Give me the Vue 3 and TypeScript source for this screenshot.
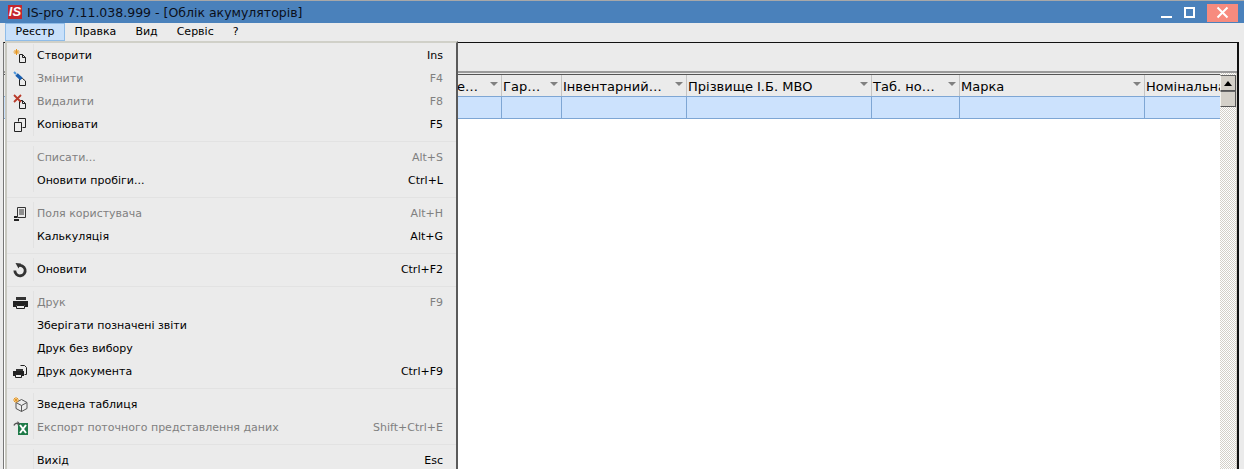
<script setup lang="ts">
type Row = { sep?: boolean; label?: string; key?: string; off?: boolean; icon?: string }
const rows: Row[] = [
  { label: 'Створити', key: 'Ins', icon: 'new' },
  { label: 'Змінити', key: 'F4', off: true, icon: 'edit' },
  { label: 'Видалити', key: 'F8', off: true, icon: 'del' },
  { label: 'Копіювати', key: 'F5', icon: 'copy' },
  { sep: true },
  { label: 'Списати...', key: 'Alt+S', off: true },
  { label: 'Оновити пробіги...', key: 'Ctrl+L' },
  { sep: true },
  { label: 'Поля користувача', key: 'Alt+H', off: true, icon: 'fields' },
  { label: 'Калькуляція', key: 'Alt+G' },
  { sep: true },
  { label: 'Оновити', key: 'Ctrl+F2', icon: 'refresh' },
  { sep: true },
  { label: 'Друк', key: 'F9', off: true, icon: 'print' },
  { label: 'Зберігати позначені звіти' },
  { label: 'Друк без вибору' },
  { label: 'Друк документа', key: 'Ctrl+F9', icon: 'printdoc' },
  { sep: true },
  { label: 'Зведена таблиця', icon: 'cube' },
  { label: 'Експорт поточного представлення даних', key: 'Shift+Ctrl+E', off: true, icon: 'excel' },
  { sep: true },
  { label: 'Вихід', key: 'Esc' },
]
const cols = [
  { text: 'е…', w: 498, cls: 'first' },
  { text: 'Гар…', w: 60 },
  { text: 'Інвентарний…', w: 125 },
  { text: 'Прізвище І.Б. МВО', w: 185 },
  { text: 'Таб. но…', w: 88 },
  { text: 'Марка', w: 185 },
  { text: 'Номінальна', w: 80, noArrow: true },
]
const menus = ['Правка', 'Вид', 'Сервіс', '?']
</script>

<template>
  <div class="app">
    <header class="titlebar">
      <span class="logo">IS</span>
      <span class="title">IS-pro 7.11.038.999 - [Облік акумуляторів]</span>
      <span class="winbtns">
        <i class="min"></i>
        <i class="max"></i>
        <span class="close">
          <svg width="13" height="13" viewBox="0 0 13 13"><path d="M1.5 1.5l10 10M11.5 1.5l-10 10" stroke="#fff" stroke-width="2" fill="none" /></svg>
        </span>
      </span>
    </header>
    <nav class="menubar">
      <span class="mi active">Реєстр</span>
      <span v-for="m in menus" :key="m" class="mi">{{ m }}</span>
    </nav>
    <main class="work">
      <div class="toolbar"></div>
      <div class="tablewrap">
        <div class="grid">
          <div class="head">
            <div v-for="c in cols" :key="c.text" class="hc" :class="c.cls" :style="{ width: c.w + 'px' }">
              <span class="ht">{{ c.text }}</span>
              <i v-if="!c.noArrow" class="arrow"></i>
            </div>
          </div>
          <div class="selrow">
            <div v-for="c in cols" :key="c.text" class="sc" :style="{ width: c.w + 'px' }"></div>
          </div>
        </div>
        <div class="scroll">
          <div class="up"><i></i></div>
          <div class="thumb"></div>
        </div>
      </div>
    </main>

    <div class="dropdown">
      <template v-for="(r, i) in rows" :key="i">
        <div v-if="r.sep" class="sep"></div>
        <div v-else class="row" :class="{ off: r.off }">
          <span class="ico">
            <svg v-if="r.icon === 'new'" width="16" height="16" viewBox="0 0 16 16">
              <path d="M6.500 6.500h3l3 3v5h-6zM9.500 6.500v3h3" fill="#ebebeb" stroke="#222" />
              <path d="M3.500 1v6M.5 4h6M1.500 2l4 4M5.500 2l-4 4" stroke="#e6961e" />
            </svg>
            <svg v-else-if="r.icon === 'edit'" width="16" height="16" viewBox="0 0 16 16">
              <path d="M6.500 7.500h3l3 2.500v4.500h-6z" fill="#ebebeb" stroke="#222" />
              <path d="M3.500 3.500l5 4.500" stroke="#1a5fb0" stroke-width="3.600" />
              <path d="M1 1l2 2" stroke="#4f97dc" stroke-width="2" />
            </svg>
            <svg v-else-if="r.icon === 'del'" width="16" height="16" viewBox="0 0 16 16">
              <path d="M6.500 6.500h3l3 3v5h-6zM9.500 6.500v3h3" fill="#ebebeb" stroke="#222" />
              <path d="M1 1l7 7M8 1l-7 7" stroke="#b93a2a" stroke-width="1.800" />
            </svg>
            <svg v-else-if="r.icon === 'copy'" width="16" height="16" viewBox="0 0 16 16">
              <path d="M5.500 4.500v-3h7v9h-3" fill="none" stroke="#222" />
              <path d="M1.500 5.500h7v9h-7z" fill="#ebebeb" stroke="#222" />
            </svg>
            <svg v-else-if="r.icon === 'fields'" width="16" height="16" viewBox="0 0 16 16">
              <path d="M4.500 1.500h8v10h-8z" fill="#ebebeb" stroke="#333" />
              <path d="M6 4h5M6 6h5M6 8h5" stroke="#333" />
              <path d="M1 10h3v2H1zM1 13h5v2H1z" fill="#222" />
            </svg>
            <svg v-else-if="r.icon === 'refresh'" width="16" height="16" viewBox="0 0 16 16">
              <path d="M5 3.800a5.200 5.200 0 1 1-3.200 4.800" fill="none" stroke="#333" stroke-width="2.800" />
              <path d="M2.500 1l5.500 .5-2.500 5z" fill="#333" />
            </svg>
            <svg v-else-if="r.icon === 'print'" width="16" height="16" viewBox="0 0 16 16">
              <path d="M3 2h10v3H3z" fill="#333" />
              <path d="M0 6h15v6H12v-2H3v2H0z" fill="#222" />
              <path d="M3.500 10.500h8v3h-8z" fill="#ebebeb" stroke="#222" />
            </svg>
            <svg v-else-if="r.icon === 'printdoc'" width="16" height="16" viewBox="0 0 16 16">
              <path d="M7.500 1.500h4l2 2v7h-2" fill="none" stroke="#222" />
              <path d="M3 5h7v2H3z" fill="#333" />
              <path d="M0 7h11v5H0z" fill="#222" />
              <path d="M2.500 10.500h6v3h-6z" fill="#ebebeb" stroke="#222" />
            </svg>
            <svg v-else-if="r.icon === 'cube'" width="16" height="16" viewBox="0 0 16 16">
              <path d="M8.500 2.500l5.500 3v6l-5.500 3-5.500-3v-6zM3 5.500l5.500 3 5.500-3M8.500 8.500v6" fill="#ebebeb" stroke="#555" />
              <path d="M3 0v6M0 3h6M1 1l4 4M5 1l-4 4" stroke="#e6961e" />
            </svg>
            <svg v-else-if="r.icon === 'excel'" width="16" height="16" viewBox="0 0 16 16">
              <path d="M5 3h10v12H5z" fill="#1e7a48" />
              <path d="M7 5l6 8M13 5l-6 8" stroke="#fff" stroke-width="2" />
              <path d="M1 5.500a3 3 0 0 1 4-2" fill="none" stroke="#555" stroke-width="1.400" />
              <path d="M4.500 1l2.500 2.500L4.500 5.500z" fill="#555" />
            </svg>
          </span>
          <span class="label">{{ r.label }}</span>
          <span class="key">{{ r.key }}</span>
        </div>
      </template>
    </div>
  </div>
</template>

<style>
html, body { margin: 0; background: #ebebeb; }
</style>

<style scoped>
.app {
  position: relative;
  width: 1244px;
  height: 469px;
  overflow: hidden;
  display: flex;
  flex-direction: column;
  background: #ebebeb;
  font-family: "DejaVu Sans", sans-serif;
  font-size: 11px;
  color: #000;
}
.titlebar {
  height: 22px;
  flex: none;
  border-top: 1px solid #a8a8a8;
  background: #4a81bb;
  display: flex;
  align-items: center;
  padding: 0 6px 0 8px;
}
.logo {
  width: 14px;
  height: 14px;
  background: #c4262e;
  color: #fff;
  font: italic bold 13px/14px "Liberation Sans", sans-serif;
  text-align: center;
  flex: none;
}
.title {
  margin-left: 5px;
  font-size: 12.5px;
  color: #0b0f1a;
  white-space: nowrap;
}
.winbtns {
  margin-left: auto;
  display: flex;
  align-items: center;
  align-self: stretch;
}
.min {
  width: 11px;
  height: 2px;
  background: #fff;
  margin: 10px 12px 0 0;
}
.max {
  width: 11px;
  height: 11px;
  box-sizing: border-box;
  border: 2px solid #fff;
  margin-right: 12px;
}
.close {
  width: 31px;
  height: 18px;
  margin-top: 1px;
  background: #f78b7e;
  display: flex;
  align-items: center;
  justify-content: center;
}
.menubar {
  height: 18px;
  flex: none;
  display: flex;
  padding-left: 5px;
  background: #ebebeb;
}
.mi {
  padding: 0 9.5px;
  line-height: 18px;
  box-sizing: border-box;
}
.mi.active {
  width: 60px;
  padding: 0;
  text-align: center;
  background: #c8e0fa;
  border: 1px solid #8fbce8;
  line-height: 16px;
}
.work {
  flex: 1;
  min-height: 0;
  display: flex;
  flex-direction: column;
  margin: 1px 5px 0 3px;
  border-top: 1px solid #111;
  border-right: 2px solid #111;
  border-left: 1px solid #777;
}
.toolbar {
  height: 28px;
  flex: none;
  border-bottom: 2px solid #9a9a9a;
}
.tablewrap {
  flex: 1;
  min-height: 0;
  display: flex;
  background: #fff;
}
.grid {
  flex: 1;
  min-width: 0;
  overflow: hidden;
  padding-top: 1px;
  background: #ebebeb;
}
.head {
  height: 22px;
  box-sizing: border-box;
  border-top: 1px solid #555;
  display: flex;
}
.hc {
  flex: none;
  box-sizing: border-box;
  position: relative;
  border-right: 1px solid #c4c4c4;
  padding-left: 1px;
  font-size: 13px;
  line-height: 23px;
  white-space: nowrap;
  overflow: hidden;
}
.hc.first {
  padding-left: 453px;
}
.arrow {
  position: absolute;
  right: 3px;
  top: 7px;
  width: 0;
  height: 0;
  border: 4px solid transparent;
  border-top: 4px solid #808080;
  border-bottom: 0;
}
.selrow {
  height: 23px;
  display: flex;
  background: #cce2fd;
  border-top: 1px solid #7ea6d4;
  border-bottom: 1px solid #7ea6d4;
  box-sizing: border-box;
  margin-bottom: 400px;
  box-shadow: 0 400px 0 400px #fff;
}
.sc {
  flex: none;
  box-sizing: border-box;
  border-right: 1px solid #7ea6d4;
}
.scroll {
  width: 16px;
  flex: none;
  padding-top: 2px;
  border-right: 1px solid #d4d0c8;
  background: repeating-conic-gradient(#d4d0c8 0 25%, #fff 0 50%) 0 0 / 2px 2px;
  display: flex;
  flex-direction: column;
}
.up, .thumb {
  height: 16px;
  flex: none;
  box-sizing: border-box;
  background: #d4d0c8;
  border: 1px solid;
  border-color: #666 #555 #555 #f4f4f0;
  display: flex;
  align-items: center;
  justify-content: center;
}
.up i {
  width: 0;
  height: 0;
  border: 4px solid transparent;
  border-bottom: 5px solid #000;
  border-top: 0;
}
.dropdown {
  position: absolute;
  left: 5px;
  top: 41px;
  width: 453px;
  height: 440px;
  box-sizing: border-box;
  background: #ebebeb;
  border-top: 2px solid #d0d0c8;
  border-left: 2px solid #c8c8c0;
  border-right: 2px solid #5a5a5a;
  padding-top: 1px;
}
.row {
  height: 23px;
  display: flex;
  align-items: center;
  padding-right: 13px;
  white-space: nowrap;
}
.ico {
  width: 27px;
  flex: none;
  display: flex;
  padding-left: 6px;
  box-sizing: border-box;
  align-self: stretch;
  align-items: center;
  border-right: 1px solid #e2e2e2;
}
.label {
  padding-left: 3px;
}
.key {
  margin-left: auto;
}
.off {
  color: #808080;
}
.sep {
  height: 10px;
  background: linear-gradient(#e2e2e2, #e2e2e2) 0 5px / 100% 1px no-repeat;
}
</style>
